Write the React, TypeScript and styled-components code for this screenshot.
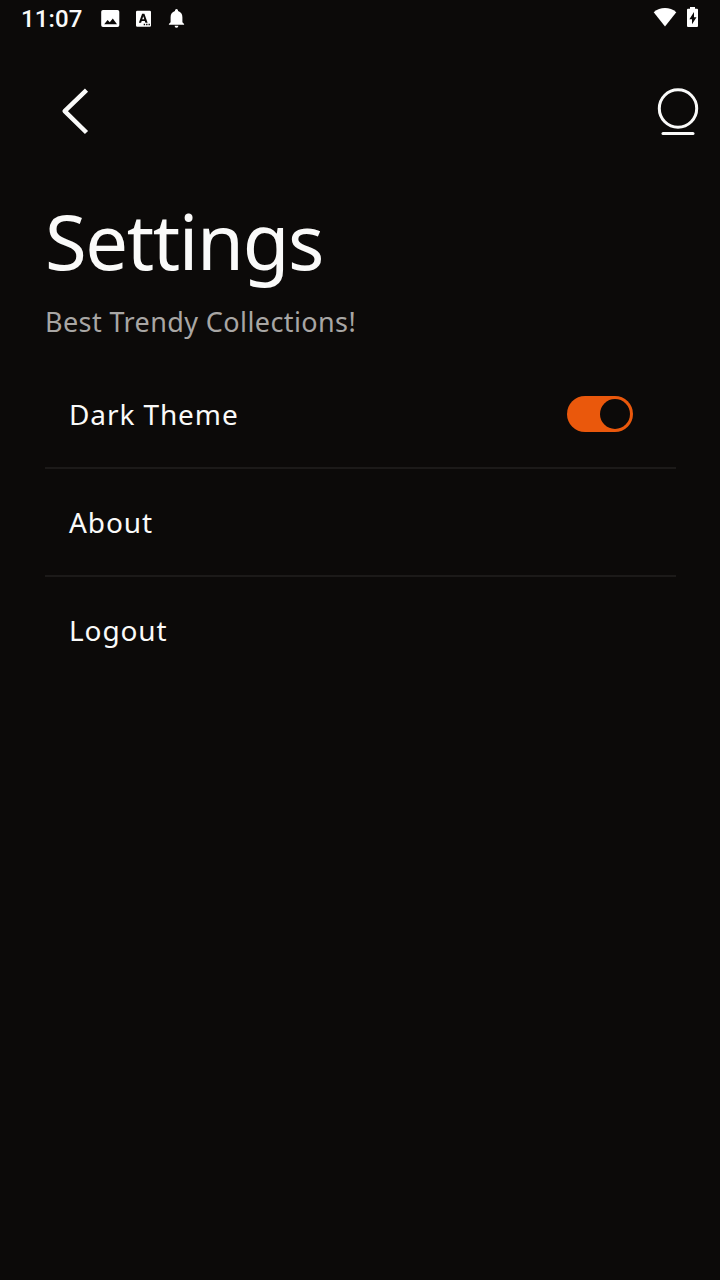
import React, { useState } from 'react';
import styled, { createGlobalStyle } from 'styled-components';

const GlobalStyle = createGlobalStyle`
  * { box-sizing: border-box; }
  body {
    margin: 0;
    background: #0c0a09;
    color: #fafaf9;
    font-family: 'Noto Sans', sans-serif;
  }
  button { border: 0; padding: 0; background: none; color: inherit; font: inherit; }
  svg { display: block; }
`;

const Screen = styled.main`
  height: 1280px;
  width: 720px;
  overflow: hidden;
`;

const StatusBar = styled.header`
  height: 36px;
  padding: 0 21px;
  display: flex;
  justify-content: space-between;
`;

const StatusGroup = styled.div`
  display: flex;
  align-items: flex-start;
`;

const Clock = styled.time`
  width: 80px;
  padding-top: 4px;
  font: 500 24px/30px Roboto, sans-serif;
  letter-spacing: 0.1px;
`;

const NavBar = styled.nav`
  height: 152px;
  padding: 52px 20px 0 60px;
  display: flex;
  justify-content: space-between;
`;

const IconButton = styled.button`
  display: block;
  height: 50px;
`;

const Content = styled.section`
  padding: 0 44px 0 45px;
`;

const Title = styled.h1`
  margin: 0;
  height: 108px;
  font-size: 76px;
  line-height: 106px;
  font-weight: 400;
  letter-spacing: -1.4px;
  white-space: nowrap;
`;

const Subtitle = styled.p`
  margin: 0;
  height: 65px;
  padding-top: 6px;
  font-size: 27px;
  line-height: 40px;
  letter-spacing: 0.4px;
  color: #a8a6a4;
  white-space: nowrap;
`;

const Row = styled.div`
  height: 108px;
  padding: 0 43px 0 24px;
  display: flex;
  align-items: center;
  justify-content: space-between;
  border-bottom: 2px solid #1c1a19;
  &:last-child { border-bottom-color: transparent; }
`;

const Label = styled.span`
  font-size: 28px;
  line-height: 40px;
  letter-spacing: 0.9px;
`;

const Toggle = styled.button<{ $on: boolean }>`
  width: 66px;
  height: 36px;
  padding: 3px;
  display: flex;
  justify-content: ${(p) => (p.$on ? 'flex-end' : 'flex-start')};
  border-radius: 18px;
  background: ${(p) => (p.$on ? '#ea580c' : '#292524')};
`;

const Knob = styled.span`
  width: 30px;
  height: 30px;
  border-radius: 50%;
  background: #0c0a09;
`;

const List = styled.div``;

function NotificationIcons() {
  return (
    <svg width="86" height="36" viewBox="101 0 86 36" fill="#fff" aria-hidden="true">
      <path fillRule="evenodd" d="M103 10h14.500a1.800 1.800 0 0 1 1.800 1.800v13.400a1.800 1.800 0 0 1-1.800 1.800h-14.500a1.800 1.800 0 0 1-1.800-1.800V11.800a1.800 1.800 0 0 1 1.800-1.800Zm1.200 14.200h12.800l-4.200-5.800-3 3.900-2.200-2.400Z" />
      <path fillRule="evenodd" d="M137.300 10.700h12.400a1.300 1.300 0 0 1 1.300 1.300v13.500a1.300 1.300 0 0 1-1.300 1.300h-12.400a1.300 1.300 0 0 1-1.300-1.300V12a1.300 1.300 0 0 1 1.300-1.300Zm4.800 3-3.200 9h2.200l.6-1.700h3.100l.6 1.700h2.200l-3.200-9Zm1.150 2.500 1 3h-2Zm.45 7.600v1.400h1.400v-1.400Zm2.400 0v1.400h1.400v-1.400Zm2.400 0v1.400h1.400v-1.400Z" />
      <path d="M176.500 9a1.500 1.500 0 0 1 1.500 1.500v.6c2.900.8 4.400 3.200 4.400 6.100v5l1.700 1.700v.9h-15.200v-.9l1.700-1.700v-5c0-2.900 1.500-5.300 4.400-6.100v-.6A1.500 1.500 0 0 1 176.500 9Zm-1.900 16.800h3.800a1.900 1.900 0 0 1-3.800 0Z" />
    </svg>
  );
}

function DeviceIcons() {
  return (
    <svg width="46" height="36" viewBox="653 0 46 36" fill="#fff" aria-hidden="true">
      <path d="M665 26.500 653.700 12.200Q658.800 8 665 8t11.300 4.200Z" />
      <path fillRule="evenodd" d="M690 7h5v1.800h2q1 0 1 1v16q0 1.200-1 1.200h-9q-1 0-1-1.200v-16q0-1 1-1h2Zm4 5-4.600 7.200h2.600v5l4.500-7h-2.500Z" />
    </svg>
  );
}

const items = ['Dark Theme', 'About', 'Logout'];

export default function App() {
  const [dark, setDark] = useState(true);
  return (
    <Screen>
      <GlobalStyle />
      <StatusBar>
        <StatusGroup>
          <Clock>11:07</Clock>
          <NotificationIcons />
        </StatusGroup>
        <DeviceIcons />
      </StatusBar>
      <NavBar>
        <IconButton aria-label="Back">
          <svg width="30" height="50" viewBox="60 88 30 50" fill="none" stroke="#fafaf9">
            <path d="M86.500 90.200 64.700 111.200 86.500 132.500" strokeWidth="4.500" strokeLinejoin="round" />
          </svg>
        </IconButton>
        <IconButton aria-label="Profile">
          <svg width="44" height="50" viewBox="656 88 44 50" fill="none" stroke="#fafaf9" strokeWidth="3" strokeLinecap="round">
            <circle cx="678" cy="108.500" r="18.700" />
            <path d="M663 133.400h30" />
          </svg>
        </IconButton>
      </NavBar>
      <Content>
        <Title>Settings</Title>
        <Subtitle>Best Trendy Collections!</Subtitle>
        <List>
          {items.map((label) => (
            <Row key={label}>
              <Label>{label}</Label>
              {label === 'Dark Theme' && (
                <Toggle $on={dark} role="switch" aria-checked={dark} aria-label="Dark Theme" onClick={() => setDark(!dark)}>
                  <Knob />
                </Toggle>
              )}
            </Row>
          ))}
        </List>
      </Content>
    </Screen>
  );
}
